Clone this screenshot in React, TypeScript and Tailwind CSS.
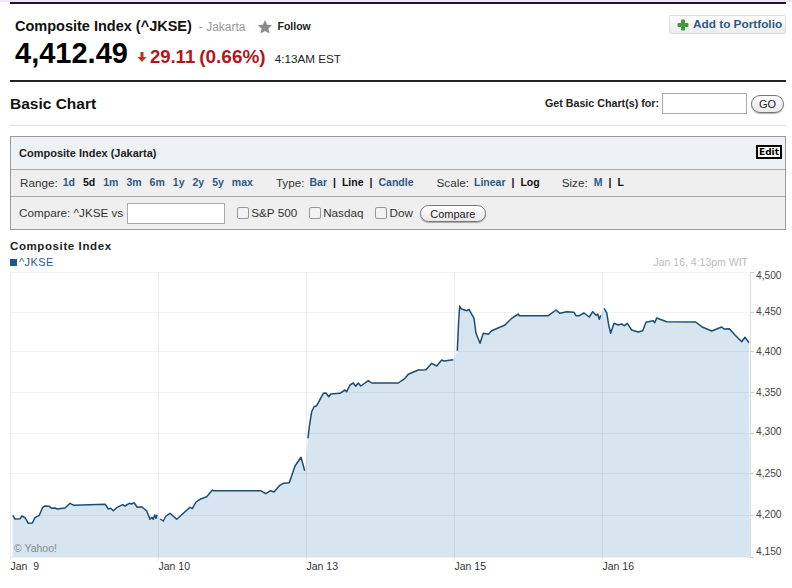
const seg1 = "12.7,515.3 15,519 20,518.7 22,516 25,517.7 28.3,523.3 32.3,523 35,517.7 39.3,515.3 42.7,507.3 45,506 49.3,506.3 51.7,508.3 55,508 57.3,509 65,508 70,503.3 74,505.3 105.3,504.3 108.3,509 110.7,508.3 113.3,510.7 116.7,507.7 122.7,504.7 125,506 129.3,503.3 131.7,504 134,502.7 137.3,507.3 141.7,506.7 146.7,511 150,519.3 152,517.3 153.3,519.3 154.7,515 156,518.3 157,514.7";
const seg2 = "160.3,519 163.3,521 166,516 170,513.3 176.7,519.3 190,507.3 192.3,508.7 196,502 200,499.3 206.7,496.7 212.3,490 213.3,490.7 260.7,490.7 265.7,493.7 270.7,490.7 274,492 279.3,485.7 283.3,483.3 289.3,482.7 295,466 301,457.3 304.7,470.7";
const seg3 = "308,438.3 309.3,426.7 311.7,411.7 314,406.7 316.7,405.7 323.3,393.3 326,393 328.7,396.7 330.7,394 340,393.3 345,390 346.7,391.7 350,385 353.3,383 355.7,386.3 358.3,383 360.7,386 368.3,380.7 371.7,383 398.3,383 405,378.3 408.3,374.3 418.3,370 426,369.7 431.7,363.3 436.7,366 441.7,360 444,361 453.3,359.7";
const seg4 = "457.3,350.7 458.7,320 459.7,306 461,308.7 466.7,310.7 469,309.3 474,318.3 476,333.3 480,343.3 483.3,333.3 488.3,334.3 491.7,330.7 505,325 511.7,318.3 518.3,314 519.3,315.7 548.3,315.7 556,310 560,313.3 566.7,311.7 574,312.3 576,315.7 579.3,315.7 584,313 589.3,317 592.7,311.7 596,315.3 597.7,314 599.3,319.3 600.7,315.3";
const seg5 = "604,308.3 606.7,312.7 608.7,325 610.7,333.3 614,323.3 618.3,325 621.7,324 624.3,325.7 627.3,323.3 631.7,330 638.3,332 642.7,330.7 646,322.3 653.3,320.7 654.7,322.7 656.7,318 666.7,321.7 695.7,322 701.7,326.7 711.7,331 721.7,327 724,329 729.3,328.7 735,335 741.7,341.7 745,337.3 749,342.7";

const hLines = [
  { y: 272, ty: 278.5, label: "4,500" },
  { y: 312, ty: 314.5, label: "4,450" },
  { y: 351, ty: 354.5, label: "4,400" },
  { y: 392, ty: 395.5, label: "4,350" },
  { y: 433, ty: 434.5, label: "4,300" },
  { y: 473, ty: 476.5, label: "4,250" },
  { y: 515, ty: 517.5, label: "4,200" },
  { y: 557, ty: 554.5, label: "4,150" },
];
const vLines = [10, 158, 306, 454, 602];
const xLabels = [
  { x: 10, label: "Jan  9" },
  { x: 158, label: "Jan 10" },
  { x: 306, label: "Jan 13" },
  { x: 454, label: "Jan 15" },
  { x: 602, label: "Jan 16" },
];

function Chart() {
  return (
    <svg viewBox="0 268 792 308" className="block w-[792px] h-[308px]">
      <polygon
        points={`${seg1} ${seg2} ${seg3} ${seg4} ${seg5} 750,557 12.7,557`}
        fill="#d6e5f0"
      />
      {hLines.map((l) => (
        <g key={l.y}>
          <line x1="10" x2="750" y1={l.y + 0.5} y2={l.y + 0.5} stroke="#5a7d9a" strokeOpacity="0.1" />
          <line x1="750" x2="754" y1={l.y + 0.5} y2={l.y + 0.5} stroke="#ccc" />
          <text x="756" y={l.ty} fontSize="10.2" fill="#444" fontFamily="'Liberation Sans', sans-serif">
            {l.label}
          </text>
        </g>
      ))}
      {vLines.map((x) => (
        <line key={x} x1={x + 0.5} x2={x + 0.5} y1="272" y2="561" stroke="#5a7d9a" strokeOpacity="0.13" />
      ))}
      <line x1="750.5" x2="750.5" y1="272" y2="557" stroke="#ddd" />
      {[seg1, seg2, seg3, seg4, seg5].map((s, i) => (
        <polyline key={i} points={s} fill="none" stroke="#1d4d73" strokeWidth="1.5" strokeLinejoin="round" />
      ))}
      <text x="14" y="552" fontSize="10.5" fill="#888" fontFamily="'Liberation Sans', sans-serif">
        © Yahoo!
      </text>
      {xLabels.map((l) => (
        <text
          key={l.x}
          x={l.x + 0.5}
          y="570"
          fontSize="10.5"
          fill="#333"
          xmlSpace="preserve"
          fontFamily="'Liberation Sans', sans-serif"
        >
          {l.label}
        </text>
      ))}
    </svg>
  );
}

function Pill({ children, className = "" }: { children: string; className?: string }) {
  return (
    <button
      className={`rounded-full border border-[#777] bg-gradient-to-b from-white to-[#e8e8e8] text-[#222] shadow-[0_1px_1px_rgba(0,0,0,0.3)] ${className}`}
    >
      {children}
    </button>
  );
}

function Check({ label }: { label: string }) {
  return (
    <span className="flex items-center gap-[2px]">
      <span className="w-[12px] h-[12px] rounded-[2px] border border-[#999] bg-[#f2f2f2]" />
      <span>{label}</span>
    </span>
  );
}

function L({ children }: { children: string }) {
  return <span className="text-[#2c5a85] font-bold">{children}</span>;
}

function B({ children }: { children: string }) {
  return <span className="text-[#111] font-bold">{children}</span>;
}

export default function App() {
  return (
    <div className="w-[792px] h-[588px] overflow-hidden bg-white text-[#333] font-['Liberation_Sans',Arial,sans-serif]">
      <div className="bg-[#efe6f2] h-[2px]" />
      <div className="ml-[10px] mr-[6px] h-[2px] bg-[#1c1430]" />

      <div className="ml-[10px] mr-[6px] h-[78px] border-b-2 border-[#222] flex justify-between">
        <div className="pl-[5px] pt-[13px]">
          <div className="flex items-center h-[20px]">
            <span className="text-[14.5px] font-bold text-[#111]">Composite Index (^JKSE)</span>
            <span className="ml-[7px] text-[12px] text-[#999]">- Jakarta</span>
            <svg viewBox="0 0 24 24" className="ml-[11px] w-[16px] h-[16px]">
              <path
                d="M12 1.5l3.2 7 7.6.8-5.700 5.100 1.600 7.500L12 18l-6.700 3.900 1.600-7.500L1.200 9.300l7.600-.8z"
                fill="#8c8c8c"
              />
            </svg>
            <span className="ml-[5px] text-[10.5px] font-bold text-[#222]">Follow</span>
          </div>
          <div className="flex items-baseline">
            <span className="text-[29px] leading-[32px] font-bold text-black">4,412.49</span>
            <svg viewBox="0 0 10 10" className="ml-[9px] w-[10px] h-[10px] self-center mt-[6px]">
              <path d="M3.500 0h3v5h3L5 10 .5 5h3z" fill="#b5371c" />
            </svg>
            <span className="ml-[3px] text-[18.5px] font-bold text-[#b3161c]">29.11</span>
            <span className="ml-[4px] text-[19px] font-bold text-[#b3161c]">(0.66%)</span>
            <span className="ml-[9px] text-[11.7px] text-[#222]">4:13AM EST</span>
          </div>
        </div>
        <div className="pt-[11px]">
          <div className="flex items-center w-[117px] h-[19px] pl-[7px] rounded-[2px] border border-[#ddd] bg-gradient-to-b from-white to-[#ececec]">
            <svg viewBox="0 0 12 12" className="w-[12px] h-[12px]">
              <path
                d="M4.500 1h3v3.500H11v3H7.500V11h-3V7.500H1v-3h3.500z"
                fill="#3f9a3a"
                stroke="#3f9a3a"
                strokeWidth="1"
                strokeLinejoin="round"
              />
            </svg>
            <span className="ml-[4px] text-[11.8px] font-bold text-[#2c5a85]">Add to Portfolio</span>
          </div>
        </div>
      </div>

      <div className="ml-[10px] mr-[6px] h-[44px] border-b border-[#ddd] flex items-center justify-between">
        <h1 className="text-[15.5px] font-bold text-[#111]">Basic Chart</h1>
        <div className="flex items-center pr-[2px]">
          <span className="text-[10.7px] font-bold text-[#222]">Get Basic Chart(s) for:</span>
          <input className="ml-[3px] w-[85px] h-[21px] bg-white border border-[#aaa]" />
          <Pill className="ml-[4px] w-[33px] h-[18px] text-[11px]">GO</Pill>
        </div>
      </div>

      <div className="ml-[10px] mt-[10px] w-[776px] h-[94px] border border-[#999] flex flex-col text-[11.7px] text-[#333]">
        <div className="h-[33px] bg-[#eef2f5] border-b border-[#aaa] flex items-center justify-between pl-[8px] pr-[3px]">
          <span className="text-[11px] font-bold text-[#222]">Composite Index (Jakarta)</span>
          <span className="border-2 border-black bg-white px-[1px] text-[9px] leading-[10px] font-bold text-black font-['DejaVu_Sans',sans-serif] mb-[2px]">
            Edit
          </span>
        </div>
        <div className="h-[27px] bg-[#efefef] border-b border-[#aaa] flex items-center pl-[9px]">
          <span>Range:</span>
          <span className="ml-[5px] flex gap-[8px] text-[10.5px]">
            <L>1d</L>
            <B>5d</B>
            <L>1m</L>
            <L>3m</L>
            <L>6m</L>
            <L>1y</L>
            <L>2y</L>
            <L>5y</L>
            <L>max</L>
          </span>
          <span className="ml-[23px]">Type:</span>
          <span className="ml-[5px] flex gap-[6px] text-[10.5px]">
            <L>Bar</L>
            <B>|</B>
            <B>Line</B>
            <B>|</B>
            <L>Candle</L>
          </span>
          <span className="ml-[23px]">Scale:</span>
          <span className="ml-[5px] flex gap-[6px] text-[10.5px]">
            <L>Linear</L>
            <B>|</B>
            <B>Log</B>
          </span>
          <span className="ml-[22px]">Size:</span>
          <span className="ml-[6px] flex gap-[6px] text-[10.5px]">
            <L>M</L>
            <B>|</B>
            <B>L</B>
          </span>
        </div>
        <div className="flex-1 bg-[#efefef] flex items-center pl-[8px]">
          <span>Compare: ^JKSE vs</span>
          <input className="ml-[4px] w-[98px] h-[21px] bg-white border border-[#aaa]" />
          <span className="ml-[12px] flex items-center gap-[12px]">
            <Check label="S&P 500" />
            <Check label="Nasdaq" />
            <Check label="Dow" />
          </span>
          <Pill className="ml-[7px] w-[66px] h-[17px] text-[11px]">Compare</Pill>
        </div>
      </div>

      <div className="h-[38px] pl-[10px] pr-[44px] flex flex-col">
        <div className="mt-[10px] text-[11.5px] leading-[13px] font-bold text-[#222] tracking-[0.6px]">Composite Index</div>
        <div className="flex items-center justify-between mt-[3px]">
          <span className="flex items-center text-[11px] leading-[13px] text-[#2c5a85] tracking-[0.4px]">
            <span className="w-[7px] h-[7px] bg-[#1d5a8a] mr-[2px]" />
            ^JKSE
          </span>
          <span className="text-[10.5px] leading-[13px] text-[#bbb]">Jan 16, 4:13pm WIT</span>
        </div>
      </div>

      <Chart />
    </div>
  );
}
